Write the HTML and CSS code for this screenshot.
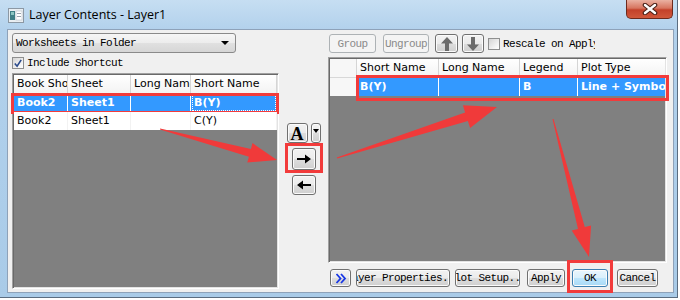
FILE: index.html
```html
<!DOCTYPE html>
<html lang="en">
<head>
    <meta charset="UTF-8">
    <title>Layer Contents - Layer1</title>
    <link rel="stylesheet" href="styles.css">
</head>
<body>

<div class="window">
    <div class="titlebar">
        <svg class="app-icon" width="16" height="15" viewBox="0 0 16 15">
            <rect x="0.5" y="0.5" width="15" height="14" fill="#e9eef2" stroke="#8c98a4"/>
            <rect x="2" y="3" width="5" height="9" fill="#3f7f86"/>
            <rect x="3" y="4" width="3" height="3" fill="#8cc6c2"/>
            <rect x="8" y="3" width="6" height="9" fill="#fff" stroke="#b8c0c8" stroke-width="0.6"/>
            <rect x="9" y="5" width="4" height="1" fill="#9aa4ae"/>
            <rect x="9" y="8" width="4" height="1" fill="#9aa4ae"/>
        </svg>
        <span class="title">Layer Contents - Layer1</span>
        <div class="close-btn">
            <svg width="16" height="12" viewBox="0 0 16 12">
                <path d="M3 2 L13 10 M13 2 L3 10" stroke="#4a2118" stroke-width="4.6" stroke-linecap="round"/>
                <path d="M3 2 L13 10 M13 2 L3 10" stroke="#fff" stroke-width="2.4" stroke-linecap="round"/>
            </svg>
        </div>
    </div>

    <div class="client">
        <!-- left: worksheet columns -->
        <div class="pane pane-left">
            <div class="combo mono">
                <span>Worksheets in Folder</span>
                <i class="combo-arrow"></i>
            </div>
            <div class="check-row mono">
                <span class="checkbox">
                    <svg width="11" height="11" viewBox="0 0 11 11"><path d="M2 5.5 L4.5 8.5 L9 1.5" fill="none" stroke="#2a4a8c" stroke-width="1.8"/></svg>
                </span>
                <span>Include Shortcut</span>
            </div>
            <div class="grid">
                <div class="grid-row grid-head">
                    <div class="cell w-book">Book Short Name</div>
                    <div class="cell w-sheet">Sheet</div>
                    <div class="cell w-long">Long Name</div>
                    <div class="cell w-short">Short Name</div>
                </div>
                <div class="grid-row is-selected marked-left">
                    <div class="cell w-book">Book2</div>
                    <div class="cell w-sheet">Sheet1</div>
                    <div class="cell w-long"></div>
                    <div class="cell w-short has-focus">B(Y)</div>
                </div>
                <div class="grid-row">
                    <div class="cell w-book">Book2</div>
                    <div class="cell w-sheet">Sheet1</div>
                    <div class="cell w-long"></div>
                    <div class="cell w-short">C(Y)</div>
                </div>
            </div>
        </div>

        <!-- middle: add / remove -->
        <div class="pane pane-mid">
            <div class="font-tools">
                <button class="btn btn-font">A</button>
                <button class="btn btn-drop"><i class="tiny-arrow"></i></button>
            </div>
            <div class="mark-box">
                <button class="btn btn-move">
                    <svg width="16" height="10" viewBox="0 0 16 10"><path d="M1 4 H9 V0.5 L15 5 L9 9.5 V6 H1 Z" fill="#000"/></svg>
                </button>
            </div>
            <button class="btn btn-move btn-back">
                <svg width="16" height="10" viewBox="0 0 16 10"><path d="M15 4 H7 V0.5 L1 5 L7 9.5 V6 H15 Z" fill="#000"/></svg>
            </button>
        </div>

        <!-- right: layer contents -->
        <div class="pane pane-right">
            <div class="toolbar mono">
                <button class="btn is-disabled w-group">Group</button>
                <button class="btn is-disabled w-ungroup">Ungroup</button>
                <button class="btn w-up">
                    <svg width="12" height="14" viewBox="0 0 12 14"><path d="M6 0 L12 6.5 H8 V14 H4 V6.5 H0 Z" fill="#6b6b6b"/></svg>
                </button>
                <button class="btn w-down">
                    <svg width="12" height="14" viewBox="0 0 12 14"><path d="M6 14 L12 7.5 H8 V0 H4 V7.5 H0 Z" fill="#6b6b6b"/></svg>
                </button>
                <span class="checkbox"></span>
                <span class="rescale">Rescale on Apply</span>
            </div>

            <div class="grid grid-layer">
                <div class="grid-row grid-head">
                    <div class="cell w-rowhead"></div>
                    <div class="cell w-sname">Short Name</div>
                    <div class="cell w-lname">Long Name</div>
                    <div class="cell w-legend">Legend</div>
                    <div class="cell w-ptype">Plot Type</div>
                </div>
                <div class="grid-row">
                    <div class="cell w-rowhead"></div>
                    <div class="row-cells is-selected marked-right">
                        <div class="cell w-sname">B(Y)</div>
                        <div class="cell w-lname"></div>
                        <div class="cell w-legend">B</div>
                        <div class="cell w-ptype">Line + Symbol</div>
                    </div>
                </div>
            </div>

            <div class="bottom-bar mono">
                <button class="btn w-more">
                    <svg width="12" height="11" viewBox="0 0 12 11"><path d="M1.5 1 L5.5 5.5 L1.5 10 M6 1 L10 5.5 L6 10" fill="none" stroke="#1736e6" stroke-width="1.8"/></svg>
                </button>
                <button class="btn w-props"><span>Layer Properties...</span></button>
                <button class="btn w-setup"><span>Plot Setup...</span></button>
                <button class="btn w-apply">Apply</button>
                <button class="btn is-default w-ok">OK</button>
                <button class="btn w-cancel">Cancel</button>
            </div>
        </div>
    </div>

    <!-- red annotation arrows drawn over the dialog -->
    <svg class="annotations" width="680" height="300" viewBox="0 0 680 300">
        <polygon points="160.1,128.5 250.9,148.9 252.5,143.1 277,160 247.3,162.5 248.9,156.7 159.9,129.5" />
        <polygon points="336.8,157.5 465.1,112.4 462.9,105.3 497,107 470.1,128.1 467.9,121 337.2,158.5" />
        <polygon points="553.5,118.9 584.8,227.1 591.1,225.5 589,257 571.7,230.5 578,228.9 552.5,119.1" />
    </svg>
</div>

</body>
</html>
```

FILE: styles.css
```css
* {
    box-sizing: border-box;
}

body {
    margin: 0;
    background-color: #fff;
    font-family: "DejaVu Sans", sans-serif;
}

.mono {
    font-family: "Liberation Mono", monospace;
    font-size: 11px;
    letter-spacing: -0.6px;
}

/* window frame */
.window {
    position: relative;
    width: 678px;
    height: 298px;
    padding: 0 3px 4px 7px;
    background: linear-gradient(180deg, #c6def2 0, #b2d1ec 30px, #a9cbe8 100%);
    border-right: 1px solid #5b6d80;
    border-bottom: 1px solid #5b6d80;
}

.titlebar {
    height: 29px;
    display: flex;
    align-items: flex-start;
}

.app-icon {
    margin: 8px 0 0 1px;
}

.title {
    margin: 6px 0 0 5px;
    font-family: "Open Sans", sans-serif;
    font-size: 12.5px;
    color: #000;
}

.close-btn {
    margin-left: auto;
    margin-right: 1px;
    width: 47px;
    height: 19px;
    display: flex;
    align-items: center;
    justify-content: center;
    border: 1px solid #6d2a1d;
    border-top: none;
    border-radius: 0 0 5px 5px;
    background: linear-gradient(180deg, #eab1a2 0, #d7755f 45%, #c3412a 55%, #d0583b 100%);
}

/* client area */
.client {
    height: 264px;
    display: grid;
    grid-template-columns: 267px 49px 339px;
    padding: 0 6px 0 4px;
    background-color: #f0f0f0;
    border: 1px solid #8ea2b9;
}

.pane {
    display: flex;
    flex-direction: column;
    min-height: 0;
}

.pane-left {
    padding: 3px 0;
}

.pane-right {
    padding: 3px 0 5px;
}

.pane-mid {
    align-items: center;
    padding-top: 93px;
}

/* combo + checkbox */
.combo {
    width: 224px;
    height: 20px;
    display: flex;
    align-items: center;
    padding-left: 3px;
    border: 1px solid #8a8a8a;
    border-radius: 3px;
    background: linear-gradient(180deg, #f6f6f6 0, #ececec 50%, #e0e0e0 51%, #d6d6d6 100%);
}

.combo-arrow {
    margin-left: auto;
    margin-right: 6px;
    border-left: 4px solid transparent;
    border-right: 4px solid transparent;
    border-top: 4px solid #000;
}

.check-row {
    height: 14px;
    margin-top: 3px;
    display: flex;
    align-items: center;
    gap: 3px;
}

.checkbox {
    width: 12px;
    height: 12px;
    flex: none;
    display: flex;
    align-items: center;
    justify-content: center;
    border: 1px solid #8e8f8f;
    background: linear-gradient(135deg, #d4d4d4 0, #f4f4f4 70%, #fff 100%);
}

/* grids */
.grid {
    flex: 1;
    margin-top: 3px;
    display: flex;
    flex-direction: column;
    background-color: #808080;
    border: 1px solid;
    border-color: #a0a0a0 #fff #fff #a0a0a0;
    box-shadow: inset 1px 1px #696969, inset -1px -1px #e3e3e3;
    padding: 1px;
}

.grid-layer {
    margin-top: 4px;
}

.grid-row {
    position: relative;
    display: flex;
    height: 18px;
    flex: none;
    background-color: #fff;
}

.grid-head {
    height: 19px;
    background: linear-gradient(180deg, #fff 0, #f3f3f3 100%);
    border-bottom: 1px solid #d8d8d8;
}

.cell {
    flex: none;
    overflow: hidden;
    white-space: nowrap;
    padding-left: 3px;
    font-size: 11px;
    line-height: 18px;
    color: #000;
    border-right: 1px solid #f2f2f2;
}

.grid-head .cell {
    border-right-color: #d5d5d5;
}

.is-selected {
    background-color: #3399ff;
}

.is-selected .cell {
    color: #fff;
    font-weight: bold;
    border-right-color: #fff;
}

.has-focus {
    outline: 1px dotted #fff;
    outline-offset: -2px;
}

.w-book { width: 54px; }
.w-sheet { width: 63px; }
.w-long { width: 60px; }
.w-short { width: 86px; }

.w-rowhead { width: 27px; background-color: #f7f7f7; border-right-color: #d5d5d5; }
.w-sname { width: 82px; }
.w-lname { width: 81px; }
.w-legend { width: 58px; }
.w-ptype { width: 87px; border-right: none; }

.row-cells {
    position: relative;
    display: flex;
}

/* red annotation boxes */
.marked-left::after,
.marked-right::after,
.w-ok::after {
    content: "";
    position: absolute;
    border: 3px solid #f23b3b;
    pointer-events: none;
}

.marked-left::after {
    left: -3px;
    right: -2px;
    top: -1px;
    bottom: -2px;
}

.marked-right::after {
    left: -1px;
    right: -4px;
    top: -3px;
    bottom: -5px;
}

.w-ok::after {
    left: -6px;
    right: -6px;
    top: -10px;
    bottom: -7px;
}

.mark-box {
    width: 38px;
    height: 30px;
    padding: 2px 4px 0;
    border: 3px solid #f23b3b;
}

/* buttons */
.btn {
    height: 19px;
    flex: none;
    display: flex;
    align-items: center;
    justify-content: center;
    padding: 0;
    overflow: hidden;
    white-space: nowrap;
    font: inherit;
    letter-spacing: inherit;
    color: #000;
    border: 1px solid #707070;
    border-radius: 3px;
    background: linear-gradient(180deg, #f2f2f2 0, #ebebeb 50%, #dddddd 51%, #cfcfcf 100%);
    box-shadow: inset 0 0 0 1px #fbfbfb;
}

.btn span {
    flex: none;
}

.is-disabled {
    color: #8a8a8a;
    border-color: #adb2b5;
    background: #f4f4f4;
    box-shadow: none;
}

.is-default {
    position: relative;
    overflow: visible;
    border-color: #3c7fb1;
    background: linear-gradient(180deg, #eaf6fd 0, #d9f0fc 50%, #bee6fd 51%, #a7d9f5 100%);
}

.font-tools {
    display: flex;
    gap: 3px;
}

.btn-font {
    width: 21px;
    height: 20px;
    font-family: "Liberation Serif", serif;
    font-weight: bold;
    font-size: 18px;
    letter-spacing: 0;
    line-height: 18px;
    padding-top: 1px;
}

.btn-drop {
    width: 10px;
    height: 20px;
    align-items: flex-start;
    padding-top: 5px;
}

.tiny-arrow {
    border-left: 3px solid transparent;
    border-right: 3px solid transparent;
    border-top: 4px solid #000;
}

.btn-move {
    width: 24px;
    height: 22px;
}

.btn-back {
    height: 20px;
    margin-top: 2px;
}

/* right toolbar */
.toolbar {
    height: 20px;
    display: flex;
    align-items: flex-end;
    padding-left: 1px;
}

.w-group { width: 47px; }
.w-ungroup { width: 46px; margin-left: 7px; }
.w-up { width: 23px; margin-left: 6px; }
.w-down { width: 22px; margin-left: 4px; }

.toolbar .checkbox {
    margin: 0 3px 3px 4px;
}

.rescale {
    width: 92px;
    overflow: hidden;
    white-space: nowrap;
    line-height: 18px;
}

/* bottom buttons */
.bottom-bar {
    height: 18px;
    margin-top: 6px;
    display: flex;
    padding-left: 2px;
}

.bottom-bar .btn {
    height: 18px;
}

.w-more { width: 21px; }
.w-props { width: 94px; margin-left: 5px; }
.w-setup { width: 65px; margin-left: 5px; }
.w-apply { width: 38px; margin-left: 7px; }
.w-ok { width: 36px; margin-left: 7px; }
.w-cancel { width: 41px; margin-left: 9px; }

/* arrows */
.annotations {
    position: absolute;
    left: 0;
    top: 0;
    pointer-events: none;
}

.annotations polygon {
    fill: #f03a3a;
}
```
